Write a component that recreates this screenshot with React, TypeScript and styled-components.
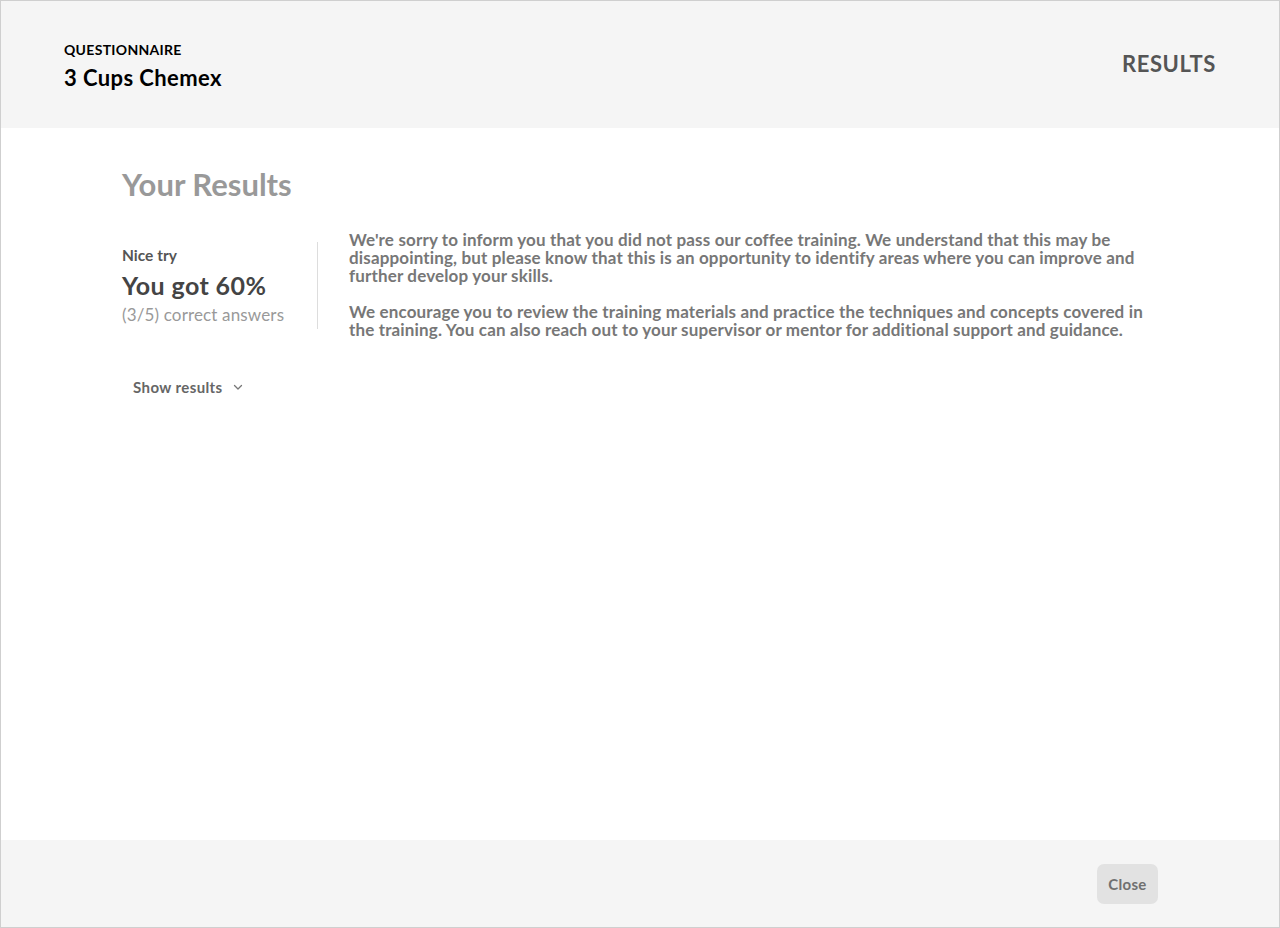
import React from "react";
import styled, { createGlobalStyle } from "styled-components";

const Global = createGlobalStyle`
  html, body { margin: 0; padding: 0; background: #fff; }
  body { font-family: Lato, "Open Sans", sans-serif; }
  * { box-sizing: border-box; }
`;

const Frame = styled.div`
  width: 1280px;
  height: 928px;
  border: 1px solid #cfcfcf;
  display: flex;
  flex-direction: column;
  background: #fff;
`;

const Header = styled.header`
  height: 127px;
  background: #f5f5f5;
  display: flex;
  align-items: flex-start;
  justify-content: space-between;
  padding: 40px 63px 0;
`;

const TitleBlock = styled.div`
  display: flex;
  flex-direction: column;
  gap: 5px;
`;

const Eyebrow = styled.div`
  font-size: 14px;
  line-height: 18px;
  font-weight: 700;
  color: #000;
  letter-spacing: 0.3px;
`;

const Title = styled.div`
  font-size: 22px;
  line-height: 28px;
  font-weight: 700;
  color: #000;
  letter-spacing: 0.4px;
`;

const StepLabel = styled.div`
  margin-top: 9px;
  font-size: 22px;
  line-height: 28px;
  font-weight: 700;
  color: #555;
  letter-spacing: 0.6px;
`;

const Main = styled.main`
  flex: 1;
  padding: 38px 121px 0;
`;

const Heading = styled.h1`
  margin: 0;
  font-size: 31px;
  line-height: 36px;
  font-weight: 700;
  color: #999;
`;

const ResultRow = styled.div`
  display: flex;
  align-items: flex-start;
  margin-top: 40px;
`;

const Score = styled.div`
  width: 196px;
  padding-bottom: 3px;
  border-right: 1px solid #ddd;
  display: flex;
  flex-direction: column;
`;

const ScoreLabel = styled.div`
  margin-top: 2px;
  font-size: 15.5px;
  line-height: 22px;
  font-weight: 700;
  color: #555;
`;

const ScoreValue = styled.div`
  margin-top: 4px;
  font-size: 25px;
  line-height: 30px;
  font-weight: 700;
  color: #444;
  letter-spacing: 0.4px;
`;

const ScoreDetail = styled.div`
  margin-top: 4px;
  font-size: 17px;
  line-height: 22px;
  font-weight: 400;
  color: #999;
  letter-spacing: 0.15px;
`;

const Message = styled.div`
  flex: 1;
  padding-left: 31px;
  margin-top: -11px;
  display: flex;
  flex-direction: column;
  gap: 18px;
`;

const Para = styled.p`
  margin: 0;
  font-size: 17px;
  font-weight: 700;
  line-height: 18px;
  color: #777;
  letter-spacing: 0.15px;
`;

const Toggle = styled.button`
  margin-top: 38px;
  margin-left: 11px;
  border: none;
  background: none;
  padding: 0;
  display: flex;
  align-items: center;
  gap: 9px;
  font-family: inherit;
  font-size: 15px;
  line-height: 20px;
  font-weight: 700;
  color: #666;
  letter-spacing: 0.4px;
  cursor: pointer;
`;

const Footer = styled.footer`
  height: 87px;
  background: #f5f5f5;
  display: flex;
  align-items: center;
  justify-content: flex-end;
  padding: 0 121px;
`;

const CloseButton = styled.button`
  width: 61px;
  height: 40px;
  padding: 0;
  border: none;
  border-radius: 7px;
  background: #e2e2e2;
  font-family: inherit;
  font-size: 15px;
  font-weight: 700;
  color: #707070;
  letter-spacing: 0.3px;
  cursor: pointer;
`;

export default function App() {
  return (
    <>
      <Global />
      <Frame>
        <Header>
          <TitleBlock>
            <Eyebrow>QUESTIONNAIRE</Eyebrow>
            <Title>3 Cups Chemex</Title>
          </TitleBlock>
          <StepLabel>RESULTS</StepLabel>
        </Header>
        <Main>
          <Heading>Your Results</Heading>
          <ResultRow>
            <Score>
              <ScoreLabel>Nice try</ScoreLabel>
              <ScoreValue>You got 60%</ScoreValue>
              <ScoreDetail>(3/5) correct answers</ScoreDetail>
            </Score>
            <Message>
              <Para>
                We're sorry to inform you that you did not pass our coffee training. We understand that this may be
                disappointing, but please know that this is an opportunity to identify areas where you can improve and
                further develop your skills.
              </Para>
              <Para>
                We encourage you to review the training materials and practice the techniques and concepts covered in
                the training. You can also reach out to your supervisor or mentor for additional support and guidance.
              </Para>
            </Message>
          </ResultRow>
          <Toggle>
            Show results
            <svg width="12" height="12" viewBox="0 0 12 12" fill="none">
              <path d="M2.5 4.5 L6 8 L9.5 4.5" stroke="#777" strokeWidth="1.3" strokeLinecap="round" strokeLinejoin="round" />
            </svg>
          </Toggle>
        </Main>
        <Footer>
          <CloseButton>Close</CloseButton>
        </Footer>
      </Frame>
    </>
  );
}
